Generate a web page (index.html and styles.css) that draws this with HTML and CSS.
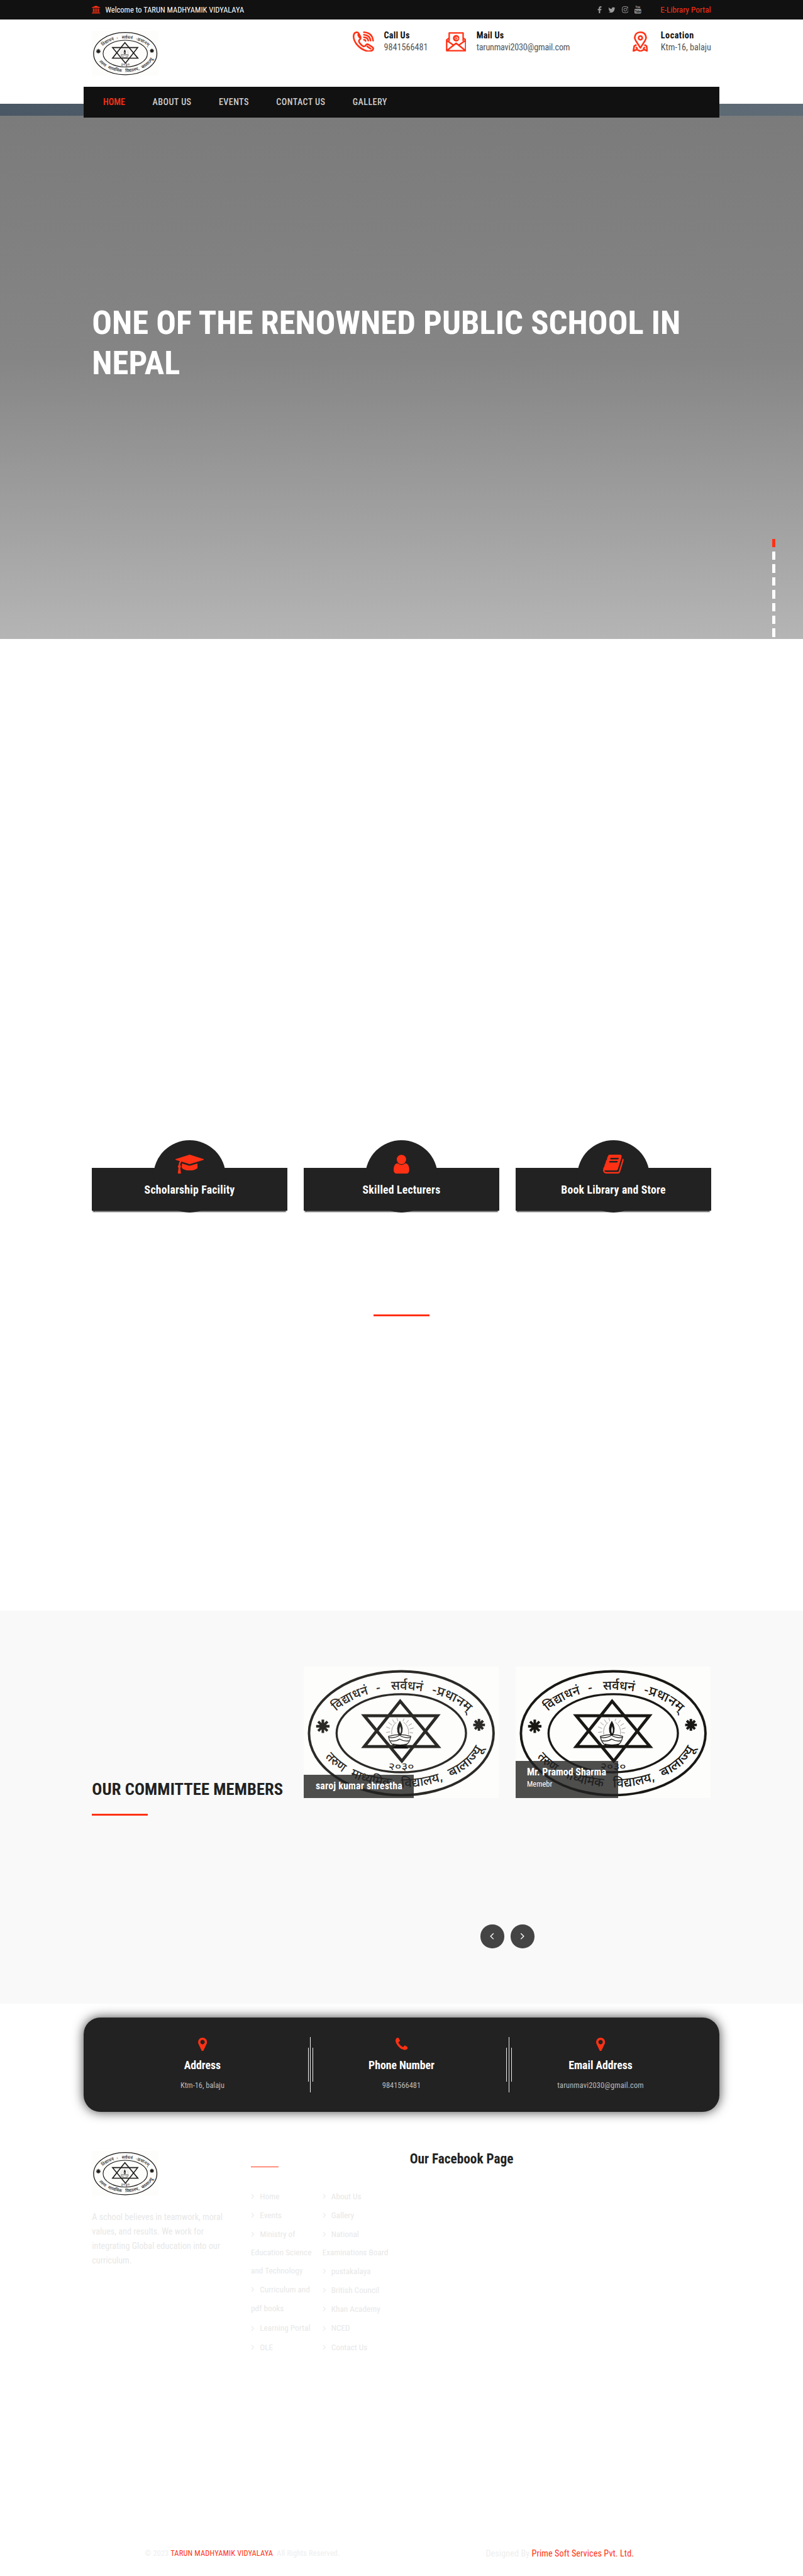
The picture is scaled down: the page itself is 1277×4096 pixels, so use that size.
FILE: index.html
```html
<!DOCTYPE html>
<html lang="en">
<head>
<meta charset="utf-8">
<title>TARUN MADHYAMIK VIDYALAYA</title>
<link rel="stylesheet" href="styles.css">
</head>
<body>
<div class="page">
<svg class="defs" width="0" height="0" aria-hidden="true">
  <defs>
    <path id="arc-top" d="M40 119.5A135 78 0 0 1 310 119.5"/>
    <path id="arc-bottom" d="M23 119.5A152 97 0 0 0 327 119.5"/>
    <symbol id="emblem" viewBox="0 0 350 236" preserveAspectRatio="none">
      <rect width="350" height="236" fill="#fdfdfb"/>
      <g fill="none" stroke="currentColor">
        <ellipse cx="175" cy="119.5" rx="165.5" ry="111" stroke-width="4.4"/>
        <ellipse cx="175" cy="119.5" rx="116" ry="70" stroke-width="3.8"/>
        <path d="M173 62L241 143.4H108.500Z" stroke-width="5.400"/>
        <path d="M108.500 88H240L176 169.500Z" stroke-width="5.400"/>
        <g stroke-width="4.600">
          <path d="M34.300 95v24M22.300 107h24M26 98.500l16.600 17M42.600 98.500l-16.600 17"/>
          <path d="M314.300 94v21M304 104.500h21M307 97l14.600 15M321.600 97l-14.600 15"/>
        </g>
        <g stroke="#8a807a" stroke-width=".9">
          <path d="M155 117l-7 1M155 111l-7-3M158 105l-6-5M163 101l-4-6M169 98l-2-6M178 98l2-5M184 101l4-5M188 106l6-4M190 112l7-2M190 118l6 1"/>
          <path d="M158 122a16 20 0 0 1 8-22M188 122a16 20 0 0 0-9-22"/>
        </g>
        <path d="M152 125q21-6 40 0q-2 14-12 17q-8 2-16 0q-10-3-12-17Z" stroke-width="1.300"/>
        <path d="M152 127q12 2 20-4q8 6 20 4M155 133q10 2 17-3q9 5 17 3M160 139q13 3 25 0" stroke-width="1.500"/>
      </g>
      <path d="M172.500 97q9 14 2 26h-4q-7-12 2-26Z" fill="currentColor"/>
      <path d="M173 107q3 8 0 13q-3-5 0-13Z" fill="#fdfdfb"/>
      <g class="emblem-text" fill="currentColor">
        <text><textPath href="#arc-top" startOffset="13%" textLength="67" lengthAdjust="spacingAndGlyphs">विद्याधनं</textPath></text>
        <text><textPath href="#arc-top" startOffset="37%">-</textPath></text>
        <text><textPath href="#arc-top" startOffset="44.700%" textLength="56" lengthAdjust="spacingAndGlyphs">सर्वधनं</textPath></text>
        <text><textPath href="#arc-top" startOffset="66%" textLength="74" lengthAdjust="spacingAndGlyphs">-प्रधानम्</textPath></text>
        <text><textPath href="#arc-bottom" startOffset="11.600%" textLength="42" lengthAdjust="spacingAndGlyphs">तरुण</textPath></text>
        <text><textPath href="#arc-bottom" startOffset="26%" textLength="77" lengthAdjust="spacingAndGlyphs">माध्यमिक</textPath></text>
        <text><textPath href="#arc-bottom" startOffset="50%" textLength="77" lengthAdjust="spacingAndGlyphs">विद्यालय,</textPath></text>
        <text><textPath href="#arc-bottom" startOffset="73%" textLength="78" lengthAdjust="spacingAndGlyphs">बालाज्यू</textPath></text>
        <text class="emblem-year" x="175" y="185" text-anchor="middle" textLength="46" lengthAdjust="spacingAndGlyphs">२०३०</text>
      </g>
    </symbol>
    <symbol id="marker" viewBox="384 128 1024 1536"><path d="M1152 640q0-106-75-181t-181-75-181 75-75 181 75 181 181 75 181-75 75-181zm256 0q0 109-33 179l-364 774q-16 33-47.500 52t-67.500 19-67.500-19-46.500-52l-365-774q-33-70-33-179 0-212 150-362t362-150 362 150 150 362z"/></symbol>
    <symbol id="chev" viewBox="0 0 6 10"><path d="M1 1l4 4-4 4" fill="none" stroke="currentColor" stroke-width="1.200"/></symbol>
  </defs>
</svg>

<header class="header">
  <div class="topbar">
    <div class="wrap topbar-row">
      <svg class="i-inst" viewBox="0 0 15 14"><path d="M7.500 0L15 3v1H0V3ZM2 5h2v6H2ZM5.200 5h1.700v6H5.200ZM8.100 5h1.700v6H8.100ZM11 5h2v6h-2ZM1 11.500h13v.9H1ZM0 13h15v1H0Z"/></svg>
      <p class="welcome">Welcome to TARUN MADHYAMIK VIDYALAYA</p>
      <div class="social">
        <svg width="8" height="13" viewBox="479 0 864 1652"><path d="M1343 12v264h-157q-86 0-116 36t-30 108v189h293l-39 296h-254v759h-306v-759h-255v-296h255v-218q0-186 104-288.500t277-102.500q147 0 228 12z"/></svg>
        <svg width="13" height="11" viewBox="44 256 1640 1280"><path d="M1684 408q-67 98-162 167 1 14 1 42 0 130-38 259.500t-115.500 248.500-184.500 210.500-258 146-323 54.500q-271 0-496-145 35 4 78 4 225 0 401-138-105-2-188-64.500t-114-159.500q33 5 61 5 43 0 85-11-112-23-185.500-111.500t-73.500-205.500v-4q68 38 146 41-66-44-105-115t-39-154q0-88 44-163 121 149 294.500 238.500t371.500 99.500q-8-38-8-74 0-134 94.500-228.500t228.500-94.500q140 0 236 102 109-21 205-78-37 115-142 178 93-10 186-50z"/></svg>
        <svg width="12" height="12" viewBox="0 0 12 12"><g fill="none" stroke="currentColor" stroke-width="1.100"><rect x=".6" y=".6" width="10.800" height="10.800" rx="3"/><circle cx="6" cy="6" r="2.500"/></g><circle cx="9.200" cy="2.800" r=".8"/></svg>
        <svg width="12" height="14" viewBox="0 0 12 14"><rect y="6" width="12" height="8" rx="1.500"/><text x="6" y="5" font-size="5.600" font-weight="700" text-anchor="middle">You</text><text x="6" y="12.300" font-size="5.600" font-weight="700" text-anchor="middle" fill="#111">Tube</text></svg>
      </div>
      <a class="portal">E-Library Portal</a>
    </div>
  </div>
  <div class="wrap brand">
    <svg class="logo"><use href="#emblem"/></svg>
    <div class="contacts">
      <div class="contact c1">
        <svg width="38" height="37" viewBox="0 0 38 37"><g fill="none" stroke="currentColor" stroke-width="2.900" stroke-linejoin="round" stroke-linecap="round"><path d="M5 2Q9 .500 11 4L14 10Q15 13 12 15Q10 17 12 20Q16 26 20 27Q22 27 24 24Q26 22 29 24L35 28Q38 30 36 33Q33 36 27 35.500Q15 33 7 23Q1 15 1.500 8Q2 3 5 2Z"/><path d="M9.500 6l2.500 5M26 27l6 4M20 1.500Q35 2.500 36.500 16.500M20 6Q31 7 32 16.500M20 10.500Q27 11 27.800 16.500M20 15q2.500 0 3 2"/></g></svg>
        <div><h4>Call Us</h4><p>9841566481</p></div>
      </div>
      <div class="contact c2">
        <svg width="37" height="35" viewBox="0 0 37 35"><g fill="none" stroke="currentColor" stroke-width="2.600" stroke-linejoin="round"><path d="M6 16V1.500h25V16M6 10.500L1.500 14v19.500h34V14L31 10.500M1.500 15l13 9M35.500 15l-13 9M2 33l16.500-13L35 33"/></g><circle cx="18.500" cy="11" r="5.800"/><path d="M20.500 8.500v4q1.500 1 2-1.500M20.500 10.500a2 2.300 0 1 0 0 1.500M14 16q4 3 8 1" fill="none" stroke="#fff" stroke-width="1"/></svg>
        <div><h4>Mail Us</h4><p class="mail">tarunmavi2030@gmail.com</p></div>
      </div>
      <div class="contact c3">
        <svg width="28" height="37" viewBox="0 0 28 37"><g fill="none" stroke="currentColor" stroke-width="2.900" stroke-linejoin="round"><path d="M14 29.500L6 17Q3.500 13 3.800 10.500Q5 1.500 14 1.500T24.200 10.500Q24.500 13 22 17Z"/><circle cx="14" cy="11.500" r="3.400"/><path d="M7 24l-4 2L1.500 35l6-2.500 6.500 3 6.500-3 6 2.500L25 26l-4-2M6 28l3 3.500M22 28l-3 3.500"/></g></svg>
        <div><h4 class="wide">Location</h4><p>Ktm-16, balaju</p></div>
      </div>
    </div>
  </div>
  <nav class="nav">
    <a class="active">HOME</a><a>ABOUT US</a><a>EVENTS</a><a>CONTACT US</a><a>GALLERY</a>
  </nav>
</header>

<section class="banner">
  <div class="strip"></div>
  <div class="hero">
    <div class="wrap"><h1>ONE OF THE RENOWNED PUBLIC SCHOOL IN NEPAL</h1></div>
    <div class="dots"><i class="on"></i><i></i><i></i><i></i><i></i><i></i><i></i><i></i></div>
  </div>
</section>

<section class="features wrap">
  <div class="feature"><div class="feature-box"><svg width="51" height="34" viewBox="0 128 2304 1536"><path d="M1774 836l18 316q4 69-82 128t-235 93.500-323 34.500-323-34.500-235-93.500-82-128l18-316 574 181q22 7 48 7t48-7zm530-324q0 23-22 31l-1120 352q-4 1-10 1t-10-1l-652-206q-43 34-71 111.500t-34 178.500q63 36 63 109 0 69-58 107l58 433q2 14-8 25-9 11-24 11h-192q-15 0-24-11-10-11-8-25l58-433q-58-38-58-107 0-73 65-111 11-207 98-330l-333-104q-22-8-22-31t22-31l1120-352q4-1 10-1t10 1l1120 352q22 8 22 31z"/></svg><h3>Scholarship Facility</h3></div></div>
  <div class="feature"><div class="feature-box"><svg width="28" height="34" viewBox="256 128 1280 1536"><path d="M1536 1399q0 109-62.500 187t-150.500 78h-854q-88 0-150.500-78t-62.500-187q0-85 8.500-160.500t31.500-152 58.500-131 94-89 134.500-34.500q131 128 313 128t313-128q76 0 134.500 34.500t94 89 58.500 131 31.500 152 8.500 160.500zm-256-887q0 159-112.500 271.500t-271.500 112.500-271.500-112.500-112.500-271.500 112.500-271.500 271.500-112.500 271.500 112.500 112.500 271.500z"/></svg><h3>Skilled Lecturers</h3></div></div>
  <div class="feature"><div class="feature-box"><svg width="37" height="34" viewBox="60 128 1672 1536"><path d="M1703 478q40 57 18 129l-275 906q-19 64-76.500 107.500t-122.500 43.500h-923q-77 0-148.500-53.500t-99.500-131.500q-24-67-2-127 0-4 3-27t4-37q1-8-3-21.500t-3-19.500q2-11 8-21t16.500-23.500 16.500-23.500q23-38 45-91.500t30-91.500q3-10 .5-30t-.5-28q3-11 17-28t17-23q21-36 42-92t25-90q1-9-2.500-32t.5-28q4-13 22-30.500t22-22.500q19-26 42.500-84.500t27.500-96.500q1-8-3-25.500t-2-26.500q2-8 9-18t18-23 17-21q8-12 16.500-30.500t15-35 16-36 19.500-32 26.500-23.500 36-11.500 47.500 5.500l-1 3q38-9 51-9h761q74 0 114 56t18 130l-274 906q-36 119-71.500 153.500t-128.500 34.500h-869q-27 0-38 15-11 16-1 43 24 70 144 70h923q29 0 56-15.500t35-41.500l300-987q7-22 5-57 38 15 59 43zm-1064 2q-4 13 2 22.500t20 9.500h608q13 0 25.500-9.500t16.500-22.500l21-64q4-13-2-22.500t-20-9.500h-608q-13 0-25.500 9.500t-16.500 22.500zm-83 256q-4 13 2 22.500t20 9.500h608q13 0 25.500-9.500t16.500-22.500l21-64q4-13-2-22.500t-20-9.500h-608q-13 0-25.500 9.500t-16.500 22.500z"/></svg><h3>Book Library and Store</h3></div></div>
</section>

<section class="notices"><div class="rule"></div></section>

<section class="committee">
  <div class="wrap committee-grid">
    <div class="committee-title"><h2>OUR COMMITTEE MEMBERS</h2><div class="rule"></div></div>
    <figure class="member first">
      <svg class="photo faded" viewBox="0 0 350 236"><use href="#emblem"/><path d="M166 141h15l7 6h-30z" fill="#111"/></svg>
      <figcaption><b>saroj kumar shrestha</b></figcaption>
    </figure>
    <figure class="member">
      <svg class="photo" viewBox="0 0 350 236"><use href="#emblem"/></svg>
      <figcaption><b>Mr. Pramod Sharma</b><span>Memebr</span></figcaption>
    </figure>
  </div>
  <div class="wrap arrows">
    <button class="arrow"><svg class="flip"><use href="#chev"/></svg></button>
    <button class="arrow"><svg><use href="#chev"/></svg></button>
  </div>
</section>

<footer class="footer">
  <div class="info">
    <div class="info-col"><svg width="16" height="24"><use href="#marker"/></svg><h3>Address</h3><p>Ktm-16, balaju</p></div>
    <div class="divider"><i></i><i class="long"></i><i></i></div>
    <div class="info-col"><svg width="22" height="24" viewBox="192 128 1408 1536" preserveAspectRatio="xMidYMin"><path d="M1600 1240q0 27-10 70.500t-21 68.500q-21 50-122 106-94 51-186 51-27 0-53-3.500t-57.500-12.500-47-14.500-55.500-20.500-49-18q-98-35-175-83-127-79-264-216t-216-264q-48-77-83-175-3-9-18-49t-20.500-55.500-14.500-47-12.500-57.500-3.500-53q0-92 51-186 56-101 106-122 25-11 68.500-21t70.500-10q14 0 21 3 18 6 53 76 11 19 30 54t35 63.500 31 53.500q3 4 17.500 25t21.500 35.500 7 28.500q0 20-28.500 50t-62 55-62 53-28.500 46q0 9 5 22.500t8.500 20.500 14 24 11.500 19q76 137 174 235t235 174q2 1 19 11.500t24 14 20.500 8.500 22.500 5q18 0 46-28.500t53-62 55-62 50-28.500q14 0 28.500 7t35.500 21.500 25 17.500q25 15 53.500 31t63.500 35 54 30q70 35 76 53 3 7 3 21z"/></svg><h3>Phone Number</h3><p>9841566481</p></div>
    <div class="divider"><i></i><i class="long"></i><i></i></div>
    <div class="info-col"><svg width="16" height="24"><use href="#marker"/></svg><h3>Email Address</h3><p class="mail">tarunmavi2030@gmail.com</p></div>
  </div>
  <div class="wrap footer-grid">
    <div class="about">
      <svg class="logo"><use href="#emblem"/></svg>
      <p>A school believes in teamwork, moral<br>values, and results. We work for<br>integrating Global education into our<br>curriculum.</p>
    </div>
    <div class="links">
      <div class="thin-rule"></div>
      <div class="link-cols">
        <ul>
          <li><svg><use href="#chev"/></svg>Home</li>
          <li><svg><use href="#chev"/></svg>Events</li>
          <li class="up"><svg><use href="#chev"/></svg>Ministry of<br>Education Science<br>and Technology</li>
          <li><svg><use href="#chev"/></svg>Curriculum and<br>pdf books</li>
          <li class="down"><svg><use href="#chev"/></svg>Learning Portal</li>
          <li><svg><use href="#chev"/></svg>OLE</li>
        </ul>
        <ul>
          <li><svg><use href="#chev"/></svg>About Us</li>
          <li><svg><use href="#chev"/></svg>Gallery</li>
          <li class="up"><svg><use href="#chev"/></svg>National<br>Examinations Board</li>
          <li><svg><use href="#chev"/></svg>pustakalaya</li>
          <li><svg><use href="#chev"/></svg>British Council</li>
          <li><svg><use href="#chev"/></svg>Khan Academy</li>
          <li><svg><use href="#chev"/></svg>NCED</li>
          <li><svg><use href="#chev"/></svg>Contact Us</li>
        </ul>
      </div>
    </div>
    <div class="facebook"><h3>Our Facebook Page</h3></div>
  </div>
  <div class="wrap legal">
    <p class="copy">© 2023 <a>TARUN MADHYAMIK VIDYALAYA</a>&nbsp; All Rights Reserved.</p>
    <p class="by">Designed By <a>Prime Soft Services Pvt. Ltd.</a></p>
  </div>
</footer>
</div>
</body>
</html>
```
FILE: styles.css
```css
html { background: #fff; }
body { margin: 0; }
.page {
  width: 1440px;
  height: 4618px;
  zoom: 0.8868;
  background: #fff;
  font-family: "Roboto Condensed", Roboto, "Liberation Sans", sans-serif;
  font-stretch: 75%;
  font-size: 16px;
  color: #222;
}
* { box-sizing: border-box; }
h1, h2, h3, h4, p, ul, figure { margin: 0; padding: 0; }
h1, h2, h3, h4 { font-weight: 700; white-space: nowrap; }
p, a { white-space: nowrap; }
ul { list-style: none; }
svg { display: block; fill: currentColor; flex: none; overflow: hidden; }
.defs { position: absolute; }
.wrap { width: 1110px; margin: 0 auto; }
.rule { width: 100px; height: 3.400px; background: #ff3115; }

.emblem-text { font: 500 23px "Noto Sans", sans-serif; }
.emblem-year { font-size: 18px; font-weight: 400; }
.logo { width: 120px; height: 80.700px; color: #1c1b19; }

/* Top bar */
.header { position: relative; z-index: 2; height: 211px; }
.topbar { height: 35px; background: #111; }
.topbar-row { display: flex; align-items: center; height: 35px; }
.i-inst { width: 15px; height: 14px; color: #ff3115; }
.welcome { margin-left: 9px; color: #fff; font-size: 14px; line-height: 35px; letter-spacing: .03px; }
.social { display: flex; align-items: center; gap: 11.500px; margin-left: auto; color: #999; }
.portal { margin-left: 34px; color: #ff3115; font-size: 15px; line-height: 35px; }

/* Brand row */
.brand { display: flex; align-items: flex-start; justify-content: space-between; height: 121px; padding-top: 20px; }
.contacts { display: grid; grid-template-columns: 166px 335px 141px; }
.contact { display: grid; grid-template-columns: 55.500px 1fr; margin-top: -2.500px; line-height: 22px; }
.contact svg { margin-top: 3.500px; color: #ff3115; }
.contact h4 { color: #111; font-size: 16px; letter-spacing: .2px; }
.contact h4.wide { letter-spacing: .55px; }
.contact p { color: #555; }
.contact .mail { letter-spacing: -.25px; }
.c2 svg { margin-top: 4.500px; }
.c3 { grid-template-columns: 51px 1fr; }

/* Navigation */
.nav { display: flex; gap: 49px; width: 1140px; height: 55px; margin: 0 auto; padding-left: 35px; background: #111; color: #ccc; font-weight: 500; line-height: 55px; letter-spacing: .45px; }
.nav .active { color: #ff3115; letter-spacing: 0; }

/* Banner */
.banner { margin-top: -25px; }
.strip { height: 23px; background: linear-gradient(90deg, #4a5764, #5d6a74 90%, #5f6c78); border-bottom: 1px solid #77797c; }
.hero { position: relative; height: 937px; padding-top: 335px; background: linear-gradient(#7b7b7b, #858585 46%, #b5b5b5); }
.hero h1 { color: #fff; font-size: 59.400px; line-height: 72px; white-space: normal; }
.dots { position: absolute; top: 757px; left: 1385px; display: grid; gap: 8px; }
.dots i { width: 5px; height: 15px; background: #fff; }
.dots .on { background: #ff3115; }

/* Feature cards */
.features { display: grid; grid-template-columns: repeat(3, 1fr); gap: 30px; height: 1025px; padding-top: 948px; }
.feature { position: relative; height: 77px; background: #222; color: #fff; box-shadow: 0 4px 2px -2px rgba(0, 0, 0, .8); }
.feature::before { content: ""; position: absolute; left: 110px; top: -50px; width: 130px; height: 130px; border-radius: 50%; background: #222; }
.feature-box { position: relative; display: flex; flex-direction: column; align-items: center; margin-top: -24px; }
.feature svg { color: #ff3115; }
.feature h3 { margin-top: 15px; font-size: 20px; line-height: 30px; letter-spacing: .25px; }
.notices { height: 717px; padding-top: 186px; }
.notices .rule { margin: 0 auto; }

/* Committee */
.committee { height: 705px; padding-top: 100px; background: #f9f9f9; }
.committee-grid { display: grid; grid-template-columns: repeat(3, 350px); gap: 30px; height: 463px; }
.committee-title { padding-top: 199.500px; }
.committee-title h2 { font-size: 30px; line-height: 40px; letter-spacing: .1px; }
.committee-title .rule { margin-top: 24.500px; }
.member { display: grid; height: 236px; }
.member > * { grid-area: 1 / 1; }
.photo { width: 350px; height: 236px; color: #191815; }
.photo.faded { color: #2b2a27; }
.member figcaption { display: flex; flex-direction: column; align-self: end; width: 183px; height: 67px; padding: 8.500px 0 0 20px; background: rgba(34, 34, 34, .8); color: #fff; white-space: nowrap; }
.member.first figcaption { width: 197px; height: 42px; padding-left: 21px; }
.member b { font-size: 18px; line-height: 24px; }
.member.first b { letter-spacing: .2px; }
.member span { font-size: 14px; line-height: 20px; }
.arrows { display: flex; gap: 12px; padding-left: 697px; }
.arrow { display: grid; place-items: center; width: 42px; height: 42px; padding: 0; border: 0; border-radius: 50%; background: #444; color: #fff; }
.arrow svg { width: 8px; height: 13px; }
.arrow .flip { transform: scaleX(-1); }

/* Contact panel */
.footer { padding-top: 24px; }
.info { display: grid; grid-template-columns: 402px 10px 346px 10px 372px; width: 1140px; height: 170px; margin: 0 auto; padding-top: 35px; border-radius: 30px; background: #222; color: #fff; box-shadow: 0 0 20px rgba(0, 0, 0, .75); }
.info-col { display: flex; flex-direction: column; align-items: center; padding: 2px 30px 0 0; }
.info-col:first-child { padding: 2px 0 0 24px; }
.info-col:last-child { padding-right: 54px; }
.info-col svg { color: #ff3115; }
.info-col h3 { margin-top: 11px; font-size: 20px; line-height: 30px; }
.info-col p { margin-top: 8px; color: #bbb; font-size: 14px; line-height: 24px; }
.info-col .mail { letter-spacing: .15px; }
.divider { display: flex; justify-content: space-between; align-items: center; height: 100px; }
.divider i { width: 1px; height: 60px; background: #eee; }
.divider .long { height: 100px; }

/* Footer columns */
.footer-grid { display: grid; grid-template-columns: 285px 285px 1fr; height: 777px; padding-top: 70px; }
.about p { margin-top: 24.800px; color: #e8e8e8; line-height: 26px; }
.thin-rule { width: 50px; height: 1.200px; margin-top: 28px; background: #ff3115; }
.link-cols { display: grid; grid-template-columns: 128px 1fr; margin-top: 36px; color: #e8e8e8; font-size: 15px; line-height: 33px; }
.link-cols li { margin-bottom: 1px; white-space: nowrap; }
.link-cols li svg { display: inline-block; width: 6px; height: 10px; margin-right: 10px; }
.link-cols .up { margin-top: -1px; }
.link-cols .down { margin-top: 3px; }
.facebook h3 { padding-top: 1px; font-size: 24px; line-height: 26px; }
.legal { display: flex; color: #eee; }
.legal a { color: #ff3115; }
.copy { width: 611px; padding-left: 95px; font-size: 14px; line-height: 30px; letter-spacing: .16px; }
.by { padding-left: 95px; font-size: 16px; line-height: 30px; letter-spacing: .1px; }
```
